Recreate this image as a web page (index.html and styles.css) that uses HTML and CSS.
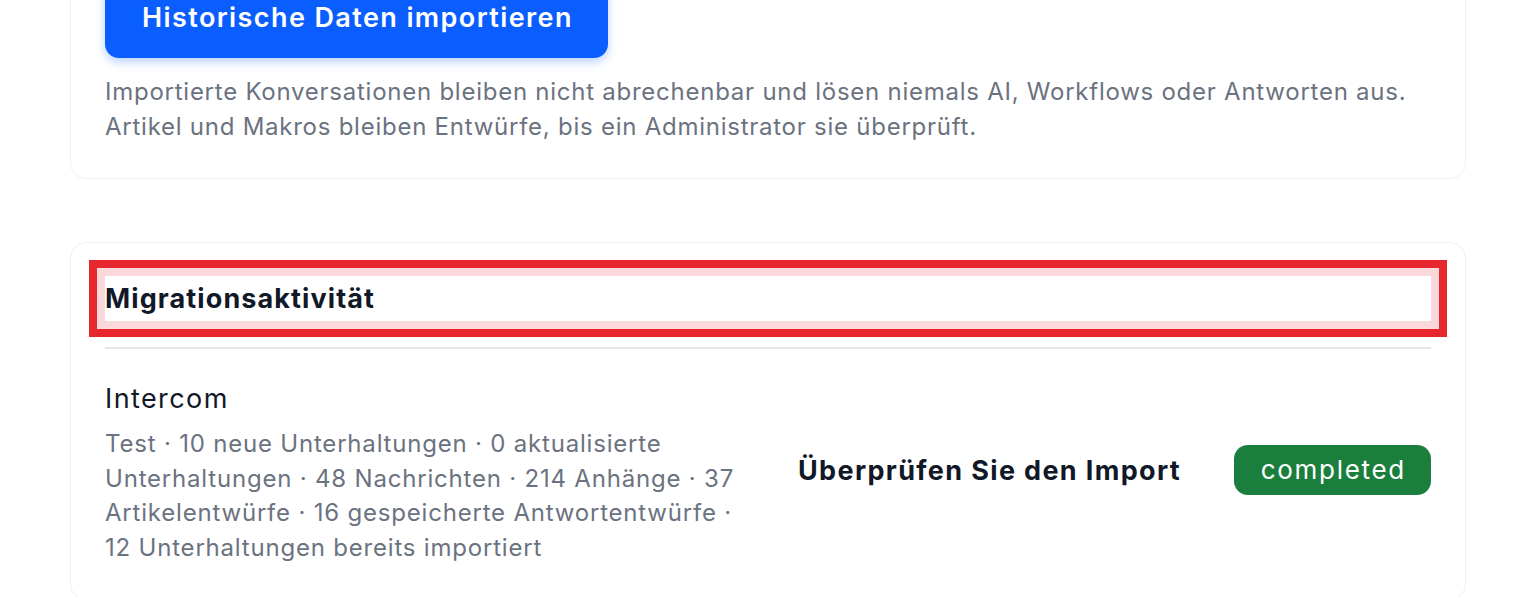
FILE: index.html
```html
<!DOCTYPE html>
<html lang="de">
<head>
    <meta charset="UTF-8">
    <meta name="viewport" content="width=device-width, initial-scale=1.0">
    <title>Migration</title>
    <link rel="stylesheet" href="styles.css">
</head>
<body>

<div class="page">
    <section class="card import-card">
        <button class="btn-primary">Historische Daten importieren</button>
        <p class="note">Importierte Konversationen bleiben nicht abrechenbar und lösen niemals AI, Workflows oder Antworten aus.<br>
        Artikel und Makros bleiben Entwürfe, bis ein Administrator sie überprüft.</p>
    </section>

    <section class="card activity-card">
        <div class="card-head">
            <h2 class="card-title highlight">Migrationsaktivität</h2>
        </div>
        <div class="activity-row">
            <div class="activity-info">
                <h3 class="source">Intercom</h3>
                <p class="meta">Test · 10 neue Unterhaltungen · 0 aktualisierte Unterhaltungen · 48 Nachrichten · 214 Anhänge · 37 Artikelentwürfe · 16 gespeicherte Antwortentwürfe · 12 Unterhaltungen bereits importiert</p>
            </div>
            <a class="review-link" href="#">Überprüfen Sie den Import</a>
            <span class="badge badge-success">completed</span>
        </div>
    </section>
</div>

</body>
</html>
```

FILE: styles.css
```css
body {
    font-family: Inter, "Noto Sans", Arial, sans-serif;
    margin: 0;
    padding: 0;
    background-color: #fff;
    color: #111827;
}
.page {
    padding: 0 70px;
    margin-top: -55px;
}
.card {
    background-color: #fff;
    border: 1px solid #eff0f3;
    border-radius: 16px;
    padding: 34px;
}
.import-card {
    margin-bottom: 63px;
}
.activity-card {
    padding-top: 33px;
}
.btn-primary {
    font-family: inherit;
    font-size: 27px;
    font-weight: 600;
    letter-spacing: 1.4px;
    color: #fff;
    background-color: #0a5dff;
    border: none;
    border-radius: 14px;
    height: 78px;
    padding: 0 35px 3px 37px;
    box-shadow: 0 4px 10px rgba(10, 93, 255, 0.28);
    cursor: pointer;
}
.note {
    margin: 16px 0 0 0;
    font-size: 24px;
    letter-spacing: 0.75px;
    line-height: 35px;
    color: #6b7280;
}
.card-head {
    padding-bottom: 26px;
    border-bottom: 2px solid #e5e7eb;
}
.card-title {
    margin: 0;
    font-size: 27px;
    font-weight: 700;
    letter-spacing: 1.1px;
    line-height: 45px;
}
.highlight {
    box-shadow: 0 0 0 8px #fbd8da, 0 0 0 16px #e7262d;
}
.activity-row {
    display: grid;
    grid-template-columns: 650px 1fr auto;
    column-gap: 43px;
    align-items: center;
    padding-top: 30px;
}
.source {
    margin: 0;
    font-size: 27px;
    font-weight: 400;
    letter-spacing: 1.4px;
    line-height: 40px;
}
.meta {
    margin: 8px 0 0 0;
    font-size: 24px;
    letter-spacing: 0.8px;
    line-height: 34.5px;
    color: #6b7280;
}
.review-link {
    font-size: 27px;
    font-weight: 700;
    letter-spacing: 1.35px;
    color: #111827;
    text-decoration: none;
    padding-bottom: 4px;
}
.badge {
    display: inline-block;
    font-size: 26px;
    letter-spacing: 1.7px;
    line-height: 50px;
    padding: 0 25px 0 27px;
    border-radius: 14px;
    margin-bottom: 4px;
}
.badge-success {
    background-color: #1a7f3c;
    color: #fff;
}
```
